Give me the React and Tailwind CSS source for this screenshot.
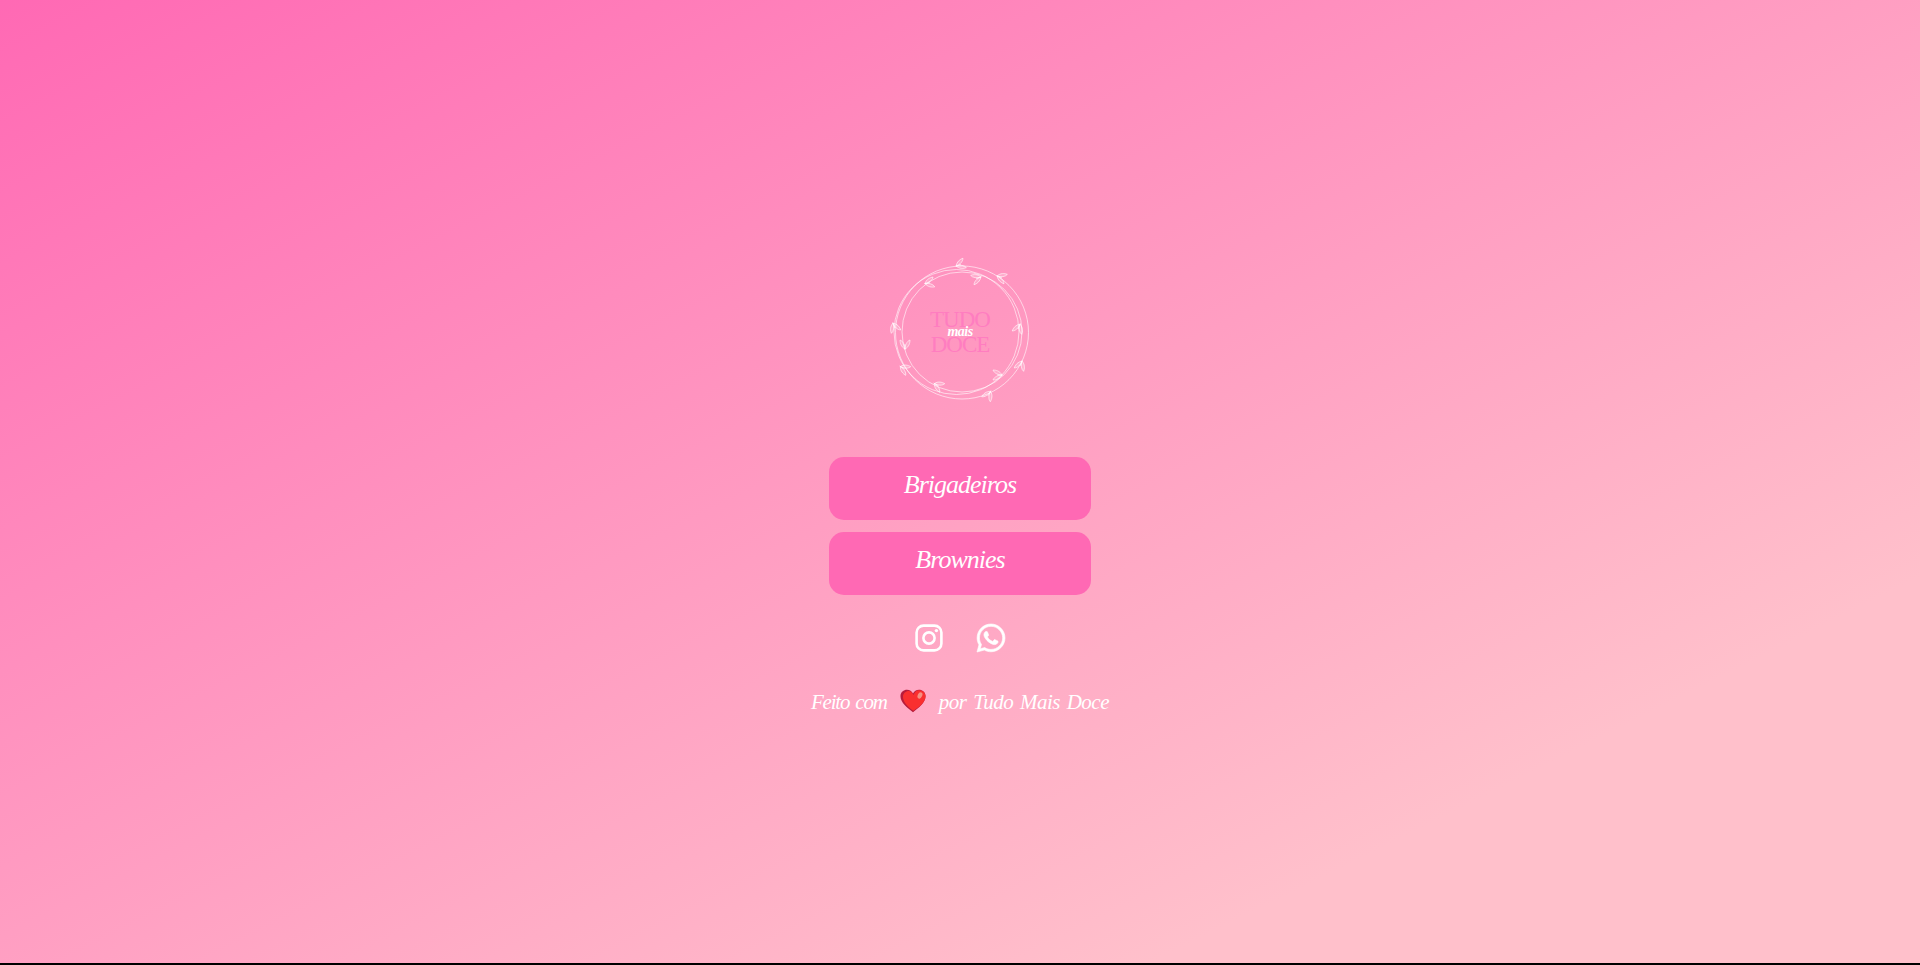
import React from "react";
import { FaWhatsapp } from "react-icons/fa";

function Wreath() {
  const leaves = [
    [74, 8, -20], [93, 21, 160], [115, 20, 20], [43, 26, -10], [134, 70, 110], [9, 69, 70],
    [20, 89, -90], [136, 107, 110], [18, 111, 30], [114, 118, 180], [52, 128, 30], [104, 137, 120],
  ];
  return (
    <svg viewBox="0 0 150 150" className="absolute inset-0 w-[150px] h-[150px]" fill="none">
      <g stroke="#fff" strokeWidth="0.6">
        <circle cx="77" cy="75.5" r="66.5" />
        <circle cx="71.5" cy="75" r="62.5" />
        <circle cx="77" cy="75" r="60" />
      </g>
      {leaves.map(([x, y, r], i) => (
        <g key={i} transform={`translate(${x} ${y}) rotate(${r})`} stroke="#fff" strokeWidth="0.55" fill="#ffffff33">
          <path d="M-4 0 L2 0" />
          <path d="M-3 0 C-1 -4 3 -5 6 -5 C5 -2 1 0 -3 0Z" />
          <path d="M-3 0 C-1 4 3 5 6 5 C5 2 1 0 -3 0Z" />
        </g>
      ))}
    </svg>
  );
}

function Instagram() {
  return (
    <svg viewBox="0 0 28 28" className="w-[28px] h-[28px]" fill="none" stroke="currentColor">
      <rect x="1.6" y="1.6" width="24.8" height="24.8" rx="7" strokeWidth="2.6" />
      <circle cx="14" cy="14" r="5.6" strokeWidth="2.6" />
      <circle cx="21.4" cy="6.6" r="1.7" fill="currentColor" stroke="none" />
    </svg>
  );
}

function Heart() {
  return (
    <svg viewBox="0 0 28 25" className="w-[26px] h-[24px] mx-[13px] shrink-0 -mt-[2px]">
      <path d="M14 24.5 C8 20 0.5 14.5 0.5 7.5 C0.5 3 4 0.5 7.5 0.5 C10.5 0.5 12.8 2 14 4.5 C15.2 2 17.5 0.5 20.5 0.5 C24 0.5 27.5 3 27.5 7.5 C27.5 14.5 20 20 14 24.5Z" fill="#b71c3c" />
      <path d="M14.5 23 C9 19.5 3.2 14 3.2 8 C3.2 4 6.3 1.6 9.2 1.6 C11.8 1.6 13.6 3.5 14.5 6 C15.6 3 17.6 0.8 20.5 0.8 C24.2 0.8 27.5 3.2 27.5 7.5 C27.5 14 20.5 19.5 14.5 23Z" fill="#f92f2f" />
      <ellipse cx="21.5" cy="6.5" rx="2.4" ry="3.6" transform="rotate(25 21.5 6.5)" fill="#f58f80" />
    </svg>
  );
}

export default function App() {
  const script = "font-['Liberation_Serif',serif] italic";
  return (
    <div className="h-[965px] bg-black overflow-hidden">
      <div className="h-[963px] flex flex-col items-center justify-center bg-[linear-gradient(to_bottom_right,#ff69b4,#ffc0cb_80%)] pt-[9px]">
        <div className="relative w-[150px] h-[150px] mb-[50px] flex flex-col items-center justify-center">
          <Wreath />
          <span className="font-['Liberation_Serif',serif] font-light text-[#ff7dc0] text-[23px] leading-[17px] tracking-[-1px]">TUDO</span>
          <span className={`${script} font-bold text-white text-[14px] leading-[8px] tracking-[-0.5px]`}>mais</span>
          <span className="font-['Liberation_Serif',serif] font-light text-[#ff7dc0] text-[23px] leading-[17px] tracking-[-1px]">DOCE</span>
        </div>

        <div className="flex flex-col gap-[12px] w-[262px]">
          {["Brigadeiros", "Brownies"].map((t) => (
            <a key={t} href="#" className={`h-[63px] rounded-[15px] bg-[#ff69b4] text-white text-center text-[26px] tracking-[-1px] leading-[56px] ${script}`}>
              {t}
            </a>
          ))}
        </div>

        <div className="flex items-center gap-[32px] pl-[2px] mt-[27px] h-[32px] text-white">
          <Instagram />
          <FaWhatsapp size={32} strokeWidth={10} />
        </div>

        <div className={`flex items-center mt-[34px] text-white text-[21px] [word-spacing:2px] leading-[28px] ${script}`}>
          <span className="tracking-[-1.2px]">Feito com</span>
          <Heart />
          <span className="tracking-[-0.5px]">por Tudo Mais Doce</span>
        </div>
      </div>
    </div>
  );
}
